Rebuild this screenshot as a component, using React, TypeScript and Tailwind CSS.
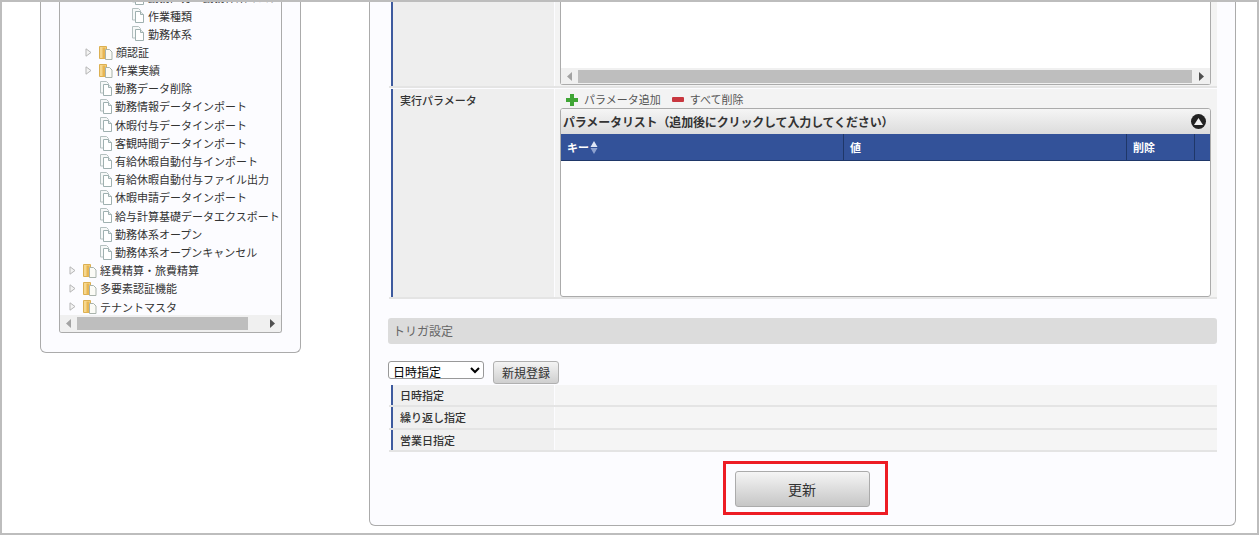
import { Fragment } from "react";

const treeRows = [
  { label: "勤務区分・勤務体系マスタ一覧", level: 2, type: "doc" },
  { label: "作業種類", level: 2, type: "doc" },
  { label: "勤務体系", level: 2, type: "doc" },
  { label: "顔認証", level: 1, type: "folder" },
  { label: "作業実績", level: 1, type: "folder" },
  { label: "勤務データ削除", level: 1, type: "doc" },
  { label: "勤務情報データインポート", level: 1, type: "doc" },
  { label: "休暇付与データインポート", level: 1, type: "doc" },
  { label: "客観時間データインポート", level: 1, type: "doc" },
  { label: "有給休暇自動付与インポート", level: 1, type: "doc" },
  { label: "有給休暇自動付与ファイル出力", level: 1, type: "doc" },
  { label: "休暇申請データインポート", level: 1, type: "doc" },
  { label: "給与計算基礎データエクスポート", level: 1, type: "doc" },
  { label: "勤務体系オープン", level: 1, type: "doc" },
  { label: "勤務体系オープンキャンセル", level: 1, type: "doc" },
  { label: "経費精算・旅費精算", level: 0, type: "folder" },
  { label: "多要素認証機能", level: 0, type: "folder" },
  { label: "テナントマスタ", level: 0, type: "folder" },
];

const triggerRows = ["日時指定", "繰り返し指定", "営業日指定"];

const DocIcon = () => (
  <svg width="14" height="15" viewBox="0 0 14 15" className="shrink-0">
    <path d="M1.500 .5h6l2 2v9.500h-8z" fill="#f6f8f8" stroke="#b4c0c0" />
    <path d="M4.500 3.500h5l3 3v8h-8z" fill="#fff" stroke="#9fb0b0" />
    <path d="M9.500 3.500v3h3" fill="#e4eaea" stroke="#9fb0b0" />
  </svg>
);

const FolderIcon = () => (
  <svg width="14" height="15" viewBox="0 0 14 15" className="shrink-0">
    <path d="M.5 1.500h7v12h-7z" fill="#f6d78e" stroke="#dcb052" />
    <path d="M3.500 2.500h3v11h-3z" fill="#e8b652" />
    <path d="M6.500 4.500h4l2.500 2.500v7.500h-6.500z" fill="#fbfbf6" stroke="#a9b3ac" />
  </svg>
);

const TreeArrow = () => (
  <svg width="7" height="9" viewBox="0 0 7 9" className="shrink-0">
    <path d="M1 .8 6 4.500 1 8.200z" fill="#f4f4f4" stroke="#b5b5b5" />
  </svg>
);

const ScrollBar = ({ thumbLeft, thumbWidth, height }: { thumbLeft: string; thumbWidth: string; height: string }) => (
  <div className={`flex items-center bg-[#f0f0f0] ${height}`}>
    <svg width="6" height="9" viewBox="0 0 6 9" className="ml-[6px] shrink-0">
      <path d="M5 0v9L0 4.500z" fill="#a3a3a3" />
    </svg>
    <div className={`h-[13px] bg-[#bebebe] ${thumbLeft} ${thumbWidth}`} />
    <svg width="6" height="9" viewBox="0 0 6 9" className="ml-auto mr-[5px] shrink-0">
      <path d="M0 0v9l5-4.500z" fill="#505050" />
    </svg>
  </div>
);

export default function App() {
  return (
    <div
      className="flex h-[535px] w-[1259px] overflow-hidden border-2 border-[#bdbdbd] bg-white text-[11px] text-[#333333]"
      style={{ fontFamily: '"Noto Sans CJK JP", "Liberation Sans", sans-serif' }}
    >
      {/* left tree panel */}
      <div className="ml-[38px] h-[351px] w-[261px] shrink-0 rounded-b-[6px] border-x border-b border-[#ababab] bg-[#fcfcff] pl-[18px]">
        <div className="flex h-[331px] w-[223px] flex-col overflow-hidden rounded-b-[3px] border-x border-b border-[#ababab] bg-[#fcfcff]">
          <div className="min-h-0 flex-1 overflow-hidden">
            <div className="-mt-[13.5px]">
              {treeRows.map((row) => (
                <div key={row.label} className="flex h-[18.2px] items-center whitespace-nowrap">
                  {row.level === 0 && <span className="w-[9px] shrink-0" />}
                  {row.level === 1 && <span className="w-[25px] shrink-0" />}
                  {row.level === 2 && <span className="w-[71px] shrink-0" />}
                  {row.type === "folder" ? (
                    <Fragment>
                      <TreeArrow />
                      <span className="ml-[7px]"><FolderIcon /></span>
                      <span className="ml-[3px]">{row.label}</span>
                    </Fragment>
                  ) : (
                    <Fragment>
                      {row.level === 1 && <span className="w-[14px] shrink-0" />}
                      <DocIcon />
                      <span className={row.level === 1 ? "ml-[2px]" : "ml-[3px]"}>{row.label}</span>
                    </Fragment>
                  )}
                </div>
              ))}
            </div>
          </div>
          <ScrollBar thumbLeft="ml-[5px]" thumbWidth="w-[171px]" height="h-[17px]" />
        </div>
      </div>

      {/* right form panel */}
      <div className="ml-[68px] flex h-[524px] w-[867px] shrink-0 flex-col rounded-b-[6px] border-x border-b border-[#ababab] bg-[#fcfcff] px-[18px]">
        <div className="ml-[1px] w-[828px]">
          {/* script row */}
          <div className="flex h-[86px] border-b-2 border-[#e4e4e4]">
            <div className="ml-[2px] w-[163px] shrink-0 border-l-2 border-[#3d5a9e] bg-[#eeeeee]" />
            <div className="ml-[1px] flex-1 bg-[#f3f3f3] pl-[5px] pr-[6px]">
              <div className="flex h-[83px] flex-col rounded-b-[3px] border-x border-b border-[#ababab] bg-white">
                <div className="flex-1" />
                <ScrollBar thumbLeft="ml-[5px]" thumbWidth="w-[614px]" height="h-[16px]" />
              </div>
            </div>
          </div>

          {/* parameter row */}
          <div className="mt-px flex h-[210px] border-b-2 border-[#e4e4e4]">
            <div className="ml-[2px] w-[163px] shrink-0 border-l-2 border-[#3d5a9e] bg-[#eeeeee] pl-[7px] pt-[3px] font-medium">
              実行パラメータ
            </div>
            <div className="ml-[1px] flex flex-1 flex-col bg-[#f3f3f3] pl-[5px] pr-[6px]">
              <div className="flex h-[19px] items-center pl-[5px] pt-[2px] text-[#555555]">
                <svg width="14" height="14" viewBox="0 0 14 14" className="shrink-0">
                  <path d="M5 1h4v4h4v4H9v4H5V9H1V5h4z" fill="#3fa535" />
                </svg>
                <span className="ml-[5px]">パラメータ追加</span>
                <span className="ml-[11px] h-[5px] w-[12px] rounded-[1px] bg-[#c8373f]" />
                <span className="ml-[6px]">すべて削除</span>
              </div>
              <div className="flex h-[189px] flex-col overflow-hidden rounded-[3px] border border-[#ababab] bg-white">
                <div className="flex h-[25px] shrink-0 items-center justify-between bg-gradient-to-b from-[#f5f5f5] to-[#dcdcdc] pl-[2px] pr-[4px] text-[12px] font-bold tracking-[-0.15px]">
                  <span>パラメータリスト（追加後にクリックして入力してください）</span>
                  <span className="flex h-[15px] w-[15px] items-center justify-center rounded-full bg-[#222222]">
                    <svg width="9" height="7" viewBox="0 0 9 7">
                      <path d="M4.500 0 9 7H0z" fill="#f2f2f2" />
                    </svg>
                  </span>
                </div>
                <div className="flex h-[27px] shrink-0 border-b border-[#1f3768] bg-[#335299] font-bold text-white">
                  <div className="flex w-[283px] items-center border-r border-[#1f3768] pl-[6px]">
                    キー
                    <svg width="8" height="13" viewBox="0 0 8 13" className="ml-[1px]">
                      <path d="M4 0l3.500 6H.5z" fill="#dfe6f5" />
                      <path d="M4 13 .5 7h7z" fill="#8ea2cf" />
                    </svg>
                  </div>
                  <div className="flex w-[283px] items-center border-r border-[#1f3768] pl-[6px]">値</div>
                  <div className="flex w-[68px] items-center border-r border-[#1f3768] pl-[6px]">削除</div>
                </div>
                <div className="flex-1" />
              </div>
            </div>
          </div>
        </div>

        {/* trigger */}
        <div className="mt-[19px] flex h-[26px] w-[829px] shrink-0 items-center rounded-[3px] bg-[#dcdcdc] pb-[1px] pl-[5px] text-[12px] text-[#666666]">
          トリガ設定
        </div>
        <div className="mt-[17px] flex h-[24px] shrink-0 items-start">
          <select
            defaultValue="日時指定"
            className="h-[18px] w-[96px] rounded-[3px] border border-[#999999] bg-white text-[12px] leading-[14px] text-black"
          >
            <option>日時指定</option>
          </select>
          <button className="ml-[9px] h-[23px] w-[66px] rounded-[3px] border border-[#b0b0b0] bg-gradient-to-b from-[#f4f4f4] to-[#cfcfcf] text-[12px]">
            新規登録
          </button>
        </div>
        <div className="ml-[1px] w-[828px]">
          {triggerRows.map((label) => (
            <div key={label} className="flex h-[22.4px] border-b-2 border-[#e4e4e4]">
              <div className="ml-[2px] flex w-[163px] shrink-0 items-center border-l-2 border-[#3d5a9e] bg-[#f0f0f0] pl-[7px] font-medium">
                {label}
              </div>
              <div className="ml-[1px] flex-1 bg-[#f5f5f5]" />
            </div>
          ))}
        </div>

        {/* update button, red mark */}
        <div className="mt-[9px] flex justify-center">
          <div className="ml-[5px] border-[3px] border-[#ed1c24] pb-[5px] pl-[9px] pr-[15px] pt-[7px]">
            <button className="block h-[36px] w-[135px] rounded-[3px] border border-[#ababab] bg-gradient-to-b from-[#f5f5f5] to-[#c6c6c6] text-[14px]">
              更新
            </button>
          </div>
        </div>
      </div>
    </div>
  );
}
